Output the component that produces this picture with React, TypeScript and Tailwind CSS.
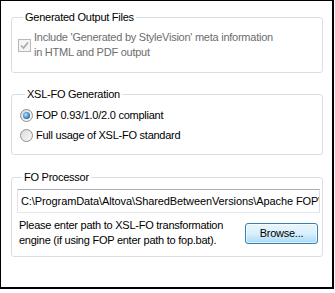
const font = { fontFamily: '"Liberation Sans", Arial, sans-serif' };

function Group({ title, children, className = "" }: { title: string; children: React.ReactNode; className?: string }) {
  return (
    <fieldset className={`min-w-0 rounded-[3px] border border-[#d5dfe5] ${className}`}>
      <legend className="ml-[5px] px-[2px] text-[11px] leading-[14px] text-black">{title}</legend>
      {children}
    </fieldset>
  );
}

function Radio({ checked }: { checked?: boolean }) {
  return (
    <span className="flex h-[13px] w-[13px] shrink-0 items-center justify-center rounded-full border border-[#8f8f8f] bg-gradient-to-br from-[#d9d9d9] to-[#fbfbfb]">
      {checked && (
        <span className="h-[7px] w-[7px] rounded-full bg-[radial-gradient(circle_at_40%_40%,#b9e4fb,#2f7fc4_60%,#16477e)]" />
      )}
    </span>
  );
}

export default function App() {
  return (
    <div
      style={font}
      className="h-[289px] w-[334px] border-b-2 border-l border-r-2 border-t border-black bg-white pl-[10px] pr-[9px] pt-[9px] text-[11px] leading-[15px] tracking-[-0.25px] text-black"
    >
      <Group title="Generated Output Files" className="pb-[12px] pl-[6px]">
        <div className="mt-[6px] flex items-center gap-[3px]">
          <span className="flex h-[13px] w-[13px] shrink-0 items-center justify-center border border-[#b8b8b8] bg-[#f4f4f4]">
            <svg width="9" height="9" viewBox="0 0 9 9">
              <path d="M1 4.5 L3.5 7 L8 1.5" fill="none" stroke="#a9a9a9" strokeWidth="1.6" />
            </svg>
          </span>
          <span className="text-[#6d6d6d]">
            Include 'Generated by StyleVision' meta information
            <br />
            in HTML and PDF output
          </span>
        </div>
      </Group>

      <Group title="XSL-FO Generation" className="mt-[14px] pb-[9px] pl-[8px]">
        <div className="mt-[4px] flex flex-col">
          <label className="flex h-[20px] items-center gap-[3px]">
            <Radio checked />
            <span>FOP 0.93/1.0/2.0 compliant</span>
          </label>
          <label className="flex h-[20px] items-center gap-[3px]">
            <Radio />
            <span>Full usage of XSL-FO standard</span>
          </label>
        </div>
      </Group>

      <Group title="FO Processor" className="mt-[15px] pb-[8px] pl-[5px] pr-[2px]">
        <div className="mt-[5px] flex h-[24px] items-center overflow-hidden whitespace-nowrap border border-[#abadb3] border-b-[#e3e9ef] border-l-[#e2e3ea] border-r-[#dbdfe6] bg-white pl-[3px] tracking-[-0.1px]">
          C:\ProgramData\Altova\SharedBetweenVersions\Apache FOP\fop.bat
        </div>
        <div className="mt-[5px] flex items-center justify-between pl-[2px] pr-[2px]">
          <p>
            Please enter path to XSL-FO transformation
            <br />
            engine (if using FOP enter path to fop.bat).
          </p>
          <button className="h-[21px] w-[73px] shrink-0 rounded-[3px] border border-[#3c7fb1] bg-gradient-to-b from-[#eaf6fd] via-[#d9f0fc] to-[#a7d9f5] text-[11px] leading-[15px] text-black shadow-[inset_0_0_0_1px_rgba(255,255,255,0.6)]">
            Browse...
          </button>
        </div>
      </Group>
    </div>
  );
}
